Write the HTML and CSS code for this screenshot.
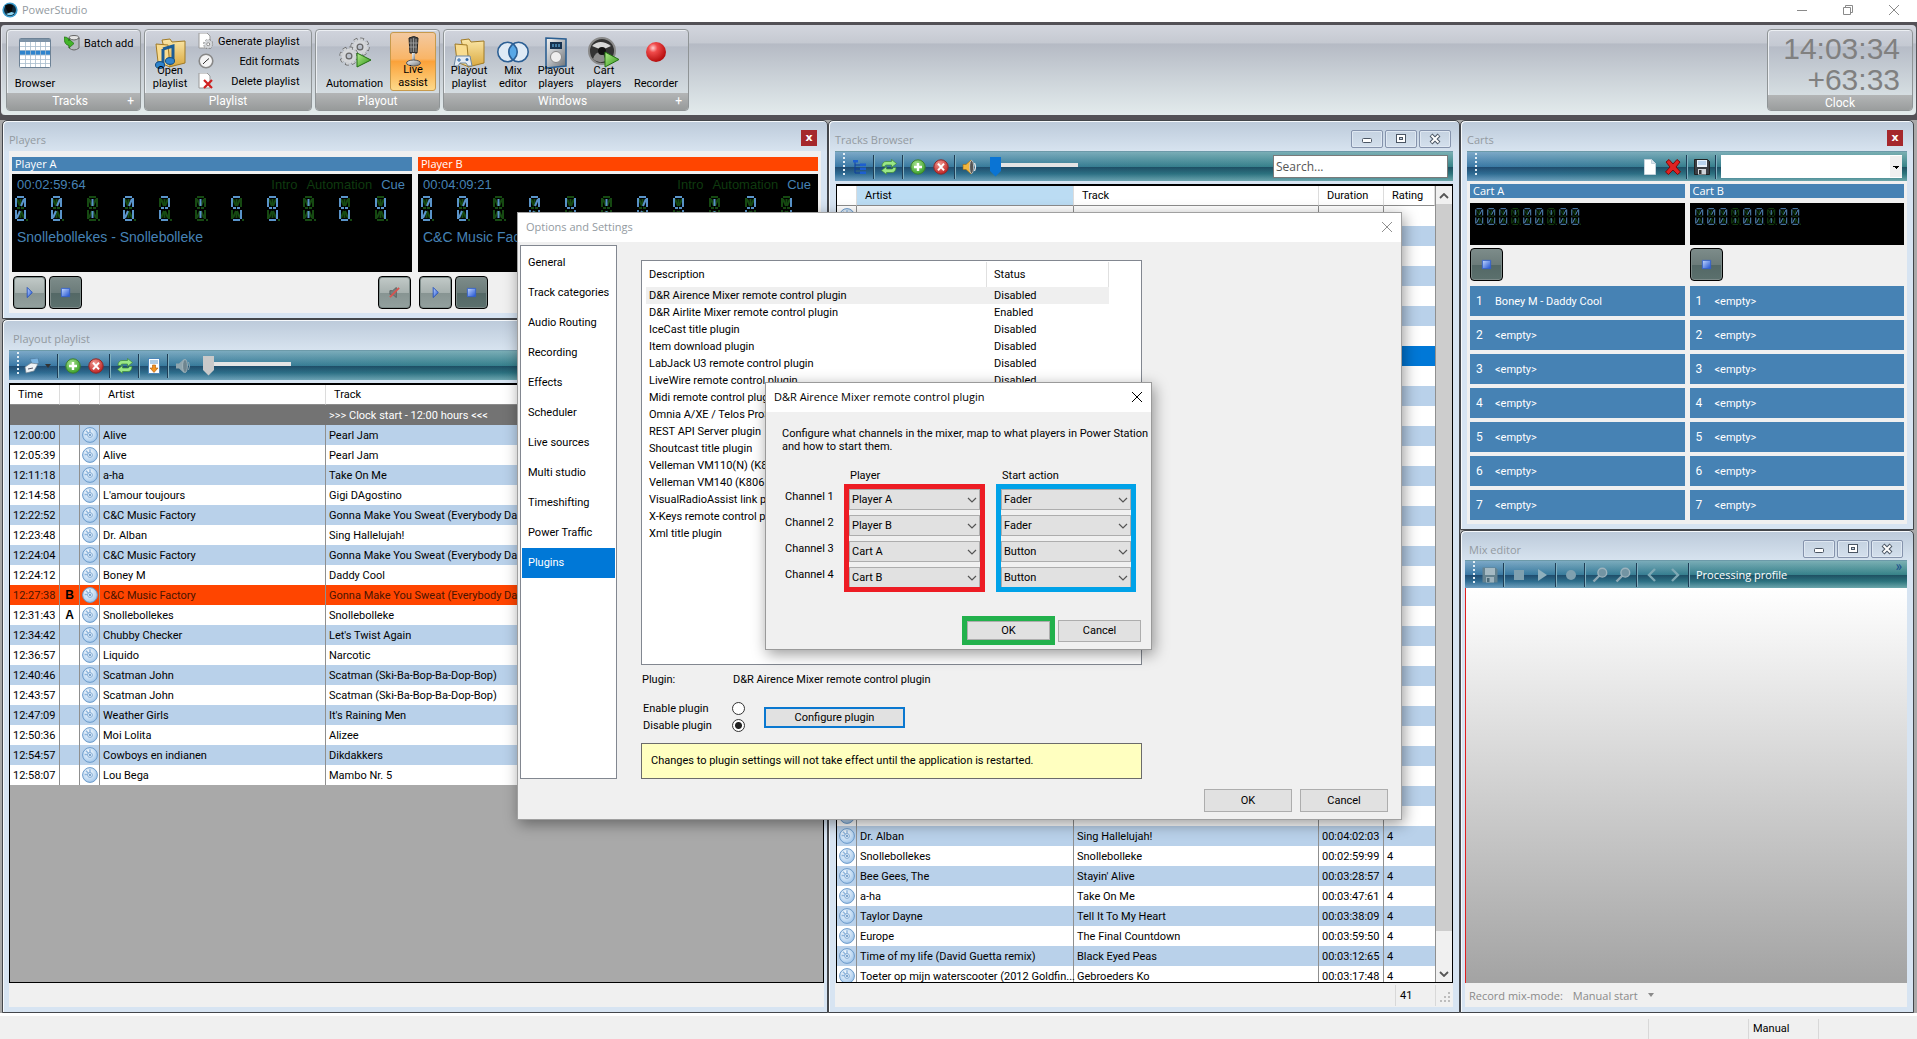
FILE: index.html
```html
<!DOCTYPE html>
<html lang="en">
<head>
<meta charset="utf-8">
<title>PowerStudio</title>
<link rel="stylesheet" href="styles.css">
</head>
<body>
<svg class="defs" aria-hidden="true">
  <defs>
    <radialGradient id="gDisc" cx=".4" cy=".35" r=".7"><stop offset="0" stop-color="#fff"/><stop offset=".6" stop-color="#c4dcf3"/><stop offset="1" stop-color="#9cc2e8"/></radialGradient>
    <radialGradient id="gGreen" cx=".4" cy=".3" r=".8"><stop offset="0" stop-color="#a5e08d"/><stop offset="1" stop-color="#2f9a1d"/></radialGradient>
    <radialGradient id="gRed" cx=".4" cy=".3" r=".8"><stop offset="0" stop-color="#f29a92"/><stop offset="1" stop-color="#b81212"/></radialGradient>
    <radialGradient id="gBall" cx=".35" cy=".3" r=".75"><stop offset="0" stop-color="#ffd0d0"/><stop offset=".3" stop-color="#f04a4a"/><stop offset="1" stop-color="#b00808"/></radialGradient>
    <linearGradient id="gBlue" x2="1" y2="1"><stop offset="0" stop-color="#c5d9ff"/><stop offset="1" stop-color="#1c4fd0"/></linearGradient>
    <linearGradient id="gFolder" x2="0" y2="1"><stop offset="0" stop-color="#fbe7a8"/><stop offset="1" stop-color="#d9a83e"/></linearGradient>
    <linearGradient id="gMetal" x2="1" y2="1"><stop offset="0" stop-color="#f4f4f4"/><stop offset=".5" stop-color="#b5b9bd"/><stop offset="1" stop-color="#6c7074"/></linearGradient>
    <linearGradient id="gPlay" x2="1" y2="1"><stop offset="0" stop-color="#b5ec8d"/><stop offset="1" stop-color="#2c9414"/></linearGradient>
    <symbol id="disc" viewBox="0 0 16 16"><circle cx="8" cy="8" r="7.4" fill="url(#gDisc)" stroke="#6b9bcb"/><path d="M8 2.2v4M4 3.8l2.6 2.8M2.6 7.5h3" stroke="#8db5dd" stroke-width="1.4"/><circle cx="8" cy="8" r="2.4" fill="#e8f2fc" stroke="#6b9bcb" stroke-width=".8"/><circle cx="8" cy="8" r=".9" class="hub"/></symbol>
    <symbol id="plus" viewBox="0 0 16 16"><circle cx="8" cy="8" r="7.2" fill="url(#gGreen)" stroke="#3c7f30"/><path d="M8 4v8M4 8h8" stroke="#fff" stroke-width="2.4"/></symbol>
    <symbol id="cross" viewBox="0 0 16 16"><circle cx="8" cy="8" r="7.2" fill="url(#gRed)" stroke="#8c2a2a"/><path d="M5 4.6l6 6.8M11 4.6l-6 6.8" stroke="#fff" stroke-width="2"/></symbol>
    <symbol id="refresh" viewBox="0 0 16 16"><path d="M1 7.500c0-3.500 2-5 4-5h5.500V.500l5 4-5 4V6H5.500C4.500 6 4 6.500 3.800 7.500zM15 8.500c0 3.500-2 5-4 5H5.500v2l-5-4 5-4V10h5c1 0 1.500-.500 1.700-1.500z" fill="#9be886" stroke="#3d8a35" stroke-width=".7"/></symbol>
    <symbol id="speaker" viewBox="0 0 16 16"><path d="M1 5.500h3L9 1v14L4 10.500H1z" fill="#f2b63c" stroke="#9a6a12" stroke-width=".6"/><ellipse cx="9.600" cy="8" rx="2" ry="6.600" fill="#555" stroke="#ddd" stroke-width=".7"/><path d="M12.500 4q2 4 0 8" stroke="#e8e8e8" stroke-width="1.200" fill="none"/></symbol>
    <symbol id="speakerOff" viewBox="0 0 16 16"><path d="M1 5.500h3L9 1v14L4 10.500H1z" fill="#8fa5ae"/><ellipse cx="10" cy="8" rx="2.400" ry="6.600" fill="#6e858f" stroke="#a9bbc2" stroke-width=".8"/><path d="M13.500 4q2 4 0 8" stroke="#8fa5ae" fill="none"/></symbol>
    <symbol id="stop" viewBox="0 0 12 12"><path d="M1.500 1.500h9v9h-9z" fill="url(#gBlue)" stroke="#3561c9"/></symbol>
    <symbol id="play" viewBox="0 0 12 12"><path d="M3.500.500v11L9 6z" fill="url(#gBlue)" stroke="#2450bb"/></symbol>
    <symbol id="mute" viewBox="0 0 12 12"><path d="M1 4h3l4-3.500v11L4 8H1z" fill="#77807f" stroke="#5a6160"/><path d="M1 11L11 1" stroke="#d9534f" stroke-width="2"/></symbol>
    <symbol id="min" viewBox="0 0 14 12"><rect x="2.500" y="5.500" width="9" height="4" rx="1" fill="#fff" stroke="#4a5563"/></symbol>
    <symbol id="max" viewBox="0 0 14 12"><rect x="2.500" y="1.500" width="9" height="8" fill="#fff" stroke="#4a5563"/><rect x="5.500" y="4.500" width="3" height="2" fill="#c8d4e4" stroke="#4a5563"/></symbol>
    <symbol id="shut" viewBox="0 0 14 12"><path d="M3 2l8 8M11 2l-8 8" stroke="#4a5563" stroke-width="4"/><path d="M3.500 2.500l7 7M10.500 2.500l-7 7" stroke="#fff" stroke-width="2"/></symbol>
    <symbol id="thinX" viewBox="0 0 12 12"><path d="M1 1l10 10M11 1L1 11" stroke="currentColor" fill="none"/></symbol>
    <symbol id="chev" viewBox="0 0 10 6"><path d="M1 1l4 4 4-4" stroke="#555" stroke-width="1.200" fill="none"/></symbol>
    <symbol id="floppy" viewBox="0 0 16 16"><path d="M.500.500h13l2 2v13H.500z" fill="#3b3f45" stroke="#222"/><rect x="3" y="1" width="10" height="7" fill="#e9f2fb"/><path d="M4 3h8M4 5h8" stroke="#8ab4e0"/><rect x="4" y="10" width="8" height="5.500" fill="#cfd3d8"/><rect x="5" y="11" width="2.500" height="4" fill="#333"/></symbol>
    <symbol id="floppyOff" viewBox="0 0 16 16"><path d="M.500.500h13l2 2v13H.500z" fill="#64828f"/><rect x="3" y="1" width="10" height="7" fill="#a5bac3"/><rect x="4" y="10" width="8" height="5.500" fill="#9db3bd"/><rect x="5" y="11" width="2.500" height="4" fill="#4b6a78"/></symbol>
    <symbol id="lens" viewBox="0 0 16 16"><path d="M1.500 14.500l6-6" stroke="#8fa9b5" stroke-width="2.400"/><circle cx="10.300" cy="5.700" r="4.400" fill="#7394a3" stroke="#9db3bd" stroke-width="1.400"/></symbol>
    <symbol id="gear" viewBox="0 0 16 16"><circle cx="8" cy="8" r="5.800" fill="none" stroke="#666" stroke-width="3.800" stroke-dasharray="2.600 1.950"/><circle cx="8" cy="8" r="4.200" fill="none" stroke="#d5d7da" stroke-width="3.400"/><circle cx="8" cy="8" r="5.800" fill="none" stroke="#d0d3d6" stroke-width="2.600" stroke-dasharray="2.200 2.350"/><circle cx="8" cy="8" r="2.300" fill="none" stroke="#666"/></symbol>
  </defs>
</svg>

<header class="app-bar">
  <svg class="logo" viewBox="0 0 16 16"><circle cx="8" cy="8" r="7.600" fill="#3c9ccd"/><circle cx="8" cy="8" r="6" fill="#0e2838"/><path d="M3 3.500q4-2.500 8 0l-2 9q-5-3-6-9z" fill="#0a0a0a"/><path d="M4 12q5 3 8.500-1l-3-1z" fill="#8fd8f5"/></svg>
  <h1>PowerStudio</h1>
  <div class="app-controls">
    <button aria-label="Minimize"><svg width="12" height="12" viewBox="0 0 12 12"><path d="M1 6.500h10" stroke="#8a8a8a"/></svg></button>
    <button aria-label="Restore"><svg width="12" height="12" viewBox="0 0 12 12"><path d="M1.500 3.500h7v7h-7zM3.500 3V1.500h7v7H9" stroke="#8a8a8a" fill="none"/></svg></button>
    <button aria-label="Close"><svg width="12" height="12"><use href="#thinX"/></svg></button>
  </div>
</header>

<nav class="ribbon">
  <section class="group tracks">
    <div class="tools">
      <button class="big"><svg viewBox="0 0 32 32"><rect x=".500" y="1.500" width="31" height="29" rx="1" fill="#fff" stroke="#6d8296"/><path d="M1 2h30v3H1z" fill="#7e94a8"/><path d="M1 13h30v5H1z" fill="#2f84cd"/><path d="M1 9.500h30M1 13.500h30M1 18h30M1 22.500h30M1 26.500h30M6.500 5v25M11.500 5v25M16.500 5v25M21.500 5v25M26.500 5v25" stroke="#a8bccd" stroke-width=".8"/></svg><span>Browser</span></button>
      <button class="small"><svg viewBox="0 0 16 16"><ellipse cx="10" cy="3" rx="5" ry="2.500" fill="#e5e5e5" stroke="#666"/><path d="M5 3v10q5 4 10 0V3q-5 4-10 0" fill="#b5b9bd" stroke="#666"/><path d="M0 2q5 0 5 4V4l5 4.500L5 13v-2.500Q0 10 0 2z" fill="#43b52a" stroke="#1d6d0f" stroke-width=".7"/></svg>Batch add</button>
    </div>
    <footer><span>Tracks</span><i>+</i></footer>
  </section>
  <section class="group playlist">
    <div class="tools">
      <button class="big"><svg viewBox="0 0 32 32"><path d="M8 3l8-1 2 3 13-1v22l-16 4z" fill="url(#gFolder)" stroke="#a07a26"/><path d="M2 7l12 1 2 22-12-5z" fill="#f9dc8f" stroke="#a07a26"/><path d="M9 12l10-3v14M9 12v15" stroke="#1c5d96" stroke-width="3" fill="none"/><ellipse cx="6" cy="28" rx="4.500" ry="3.400" fill="#2f84cd" stroke="#124a7c"/><ellipse cx="16" cy="24" rx="4.500" ry="3.400" fill="#2f84cd" stroke="#124a7c"/></svg><span>Open<br>playlist</span></button>
      <div class="stack">
        <button class="small"><svg viewBox="0 0 16 16"><path d="M1 0h8l3 3v12H1z" fill="#fff" stroke="#999"/><g transform="translate(5 6) scale(.65)"><use href="#gear" width="16" height="16"/></g></svg><span>Generate playlist</span></button>
        <button class="small"><svg viewBox="0 0 16 16"><circle cx="8" cy="8" r="6.800" fill="#f4f4f4" stroke="#888" stroke-width="1.600"/><path d="M8 8l3-2.500M8 8l-3 3" stroke="#333"/></svg><span>Edit formats</span></button>
        <button class="small"><svg viewBox="0 0 16 16"><path d="M1 0h8l3 3v12H1z" fill="#fff" stroke="#999"/><path d="M6 7l8 8M14 7l-8 8" stroke="#cf1f1f" stroke-width="2.200"/></svg><span>Delete playlist</span></button>
      </div>
    </div>
    <footer><span>Playlist</span></footer>
  </section>
  <section class="group playout">
    <div class="tools">
      <button class="big"><svg viewBox="0 0 32 32"><use href="#gear" x="11" y="0" width="20" height="20"/><use href="#gear" x="0" y="9" width="20" height="20"/><path d="M18 16v14l14-7z" fill="url(#gPlay)" stroke="#236f12"/></svg><span>Automation</span></button>
      <button class="big active"><svg viewBox="0 0 32 32"><path d="M12 2q5-3 9 0l-1 15h-7z" fill="#4a4a4a" stroke="#222"/><path d="M14 3v13M16.500 2v14M19 3v13M12 7h9M12 11h8" stroke="#a5a5a5" stroke-width=".8"/><path d="M15 17h3v8h-3z" fill="url(#gMetal)"/><ellipse cx="16.500" cy="27" rx="7" ry="3" fill="url(#gMetal)" stroke="#555"/></svg><span>Live<br>assist</span></button>
    </div>
    <footer><span>Playout</span></footer>
  </section>
  <section class="group windows">
    <div class="tools">
      <button class="big"><svg viewBox="0 0 32 32"><path d="M8 3l8-1 2 3 13-1v22l-16 4z" fill="url(#gFolder)" stroke="#a07a26"/><path d="M2 7l12 1 2 22-12-5z" fill="#f9dc8f" stroke="#a07a26"/><path d="M3 19h14l2 10h-4l-2-3H7l-2 3H1z" fill="#e4ebf2" stroke="#6c87a2"/><path d="M4 23h4M6 21v4" stroke="#2f68a8"/><circle cx="14" cy="22.500" r="1.500" fill="#2f68a8"/></svg><span>Playout<br>playlist</span></button>
      <button class="big"><svg viewBox="0 0 32 32"><circle cx="10.500" cy="15" r="10" fill="#dfeaf5"/><circle cx="21.500" cy="15" r="10" fill="#dfeaf5"/><path d="M16 6.700a10 10 0 0 1 0 16.600a10 10 0 0 1 0-16.600" fill="#57a7e6"/><circle cx="10.500" cy="15" r="9.700" fill="none" stroke="#2c5f94" stroke-width="1.600"/><circle cx="21.500" cy="15" r="9.700" fill="none" stroke="#2c5f94" stroke-width="1.600"/></svg><span>Mix<br>editor</span></button>
      <button class="big"><svg viewBox="0 0 32 32"><path d="M6 1l20 1v27l-20 2z" fill="url(#gMetal)" stroke="#2b5f92" stroke-width="1.600"/><rect x="10" y="5" width="12" height="7" fill="#16324f"/><path d="M13 7v3M16 7v3M19 7v3" stroke="#6fc3f5"/><circle cx="16" cy="20" r="5.500" fill="#eee" stroke="#888"/></svg><span>Playout<br>players</span></button>
      <button class="big"><svg viewBox="0 0 32 32"><circle cx="14" cy="14" r="13" fill="#333" stroke="#8a8a8a" stroke-width="2"/><path d="M4 9q8-8 19 0l-9 4z" fill="#d8d8d8"/><path d="M5 22q2-7 9-8l4 10q-8 3-13-2z" fill="#8c8c8c"/><circle cx="14" cy="14" r="4" fill="#111"/><path d="M17 15v15l14-7.500z" fill="url(#gPlay)" stroke="#236f12"/></svg><span>Cart<br>players</span></button>
      <button class="big"><svg viewBox="0 0 32 32"><circle cx="16" cy="15" r="10" fill="url(#gBall)"/></svg><span>Recorder</span></button>
    </div>
    <footer><span>Windows</span><i>+</i></footer>
  </section>
  <section class="group clock">
    <div class="time"><time>14:03:34</time><span>+63:33</span></div>
    <footer><span>Clock</span></footer>
  </section>
</nav>

<main class="desktop">
  <div class="col">
    <section class="win players">
      <header><h2>Players</h2><button class="red-x" aria-label="Close">x</button></header>
      <div class="client decks">
        <article class="deck">
          <h3>Player A</h3>
          <div class="lcd">
            <p class="info"><b>00:02:59:64</b><i>Intro</i><i>Automation</i><b>Cue</b></p>
            <div class="segs" data-value="00:02:59:64"></div>
            <p class="song">Snollebollekes - Snollebolleke</p>
          </div>
          <div class="keys"><button class="key" aria-label="Play"><svg><use href="#play"/></svg></button><button class="key dark" aria-label="Stop"><svg><use href="#stop"/></svg></button><button class="key last" aria-label="Mute"><svg><use href="#mute"/></svg></button></div>
        </article>
        <article class="deck">
          <h3 class="hot">Player B</h3>
          <div class="lcd">
            <p class="info"><b>00:04:09:21</b><i>Intro</i><i>Automation</i><b>Cue</b></p>
            <div class="segs" data-value="00:04:09:21"></div>
            <p class="song">C&amp;C Music Factory</p>
          </div>
          <div class="keys"><button class="key" aria-label="Play"><svg><use href="#play"/></svg></button><button class="key dark" aria-label="Stop"><svg><use href="#stop"/></svg></button></div>
        </article>
      </div>
    </section>
    <section class="win grow queue">
      <header><h2 class="in">Playout playlist</h2></header>
      <div class="toolbar">
        <span class="grip"></span>
        <button class="wide" aria-label="Print"><svg viewBox="0 0 16 16"><path d="M6 1l8-1 1 5-6 3z" fill="#7ab3e0" stroke="#4a7396" stroke-width=".6"/><path d="M1 9l6-4 7 1-4 7-8 2z" fill="#eef3f6" stroke="#70808c" stroke-width=".7"/><path d="M4 11l5-1" stroke="#556"/></svg><span class="caret"></span></button>
        <hr>
        <button aria-label="Add"><svg><use href="#plus"/></svg></button>
        <button aria-label="Remove"><svg><use href="#cross"/></svg></button>
        <hr>
        <button aria-label="Refresh"><svg><use href="#refresh"/></svg></button>
        <hr>
        <button aria-label="Insert"><svg viewBox="0 0 16 16"><rect x="2.500" y=".500" width="11" height="15" fill="#fff" stroke="#4f87b9"/><path d="M4 3h8M4 5h8" stroke="#5c98cf"/><path d="M6.500 7h3v3h2.500l-4 4.500-4-4.500h2.500z" fill="#f39321" stroke="#a8570a" stroke-width=".6"/></svg></button>
        <hr>
        <button aria-label="Volume"><svg><use href="#speakerOff"/></svg></button>
        <input class="vol off" type="range" value="0" aria-label="Playlist volume">
      </div>
      <div class="grid-box gray">
        <table class="grid pl">
          <colgroup><col><col><col><col><col></colgroup>
          <thead><tr><th>Time</th><th></th><th></th><th>Artist</th><th>Track</th></tr></thead>
          <tbody>
            <tr class="mark"><td></td><td></td><td></td><td></td><td>&gt;&gt;&gt; Clock start - 12:00 hours &lt;&lt;&lt;</td></tr>
            <tr><td>12:00:00</td><td></td><td><svg><use href="#disc"/></svg></td><td>Alive</td><td>Pearl Jam</td></tr>
            <tr><td>12:05:39</td><td></td><td><svg><use href="#disc"/></svg></td><td>Alive</td><td>Pearl Jam</td></tr>
            <tr><td>12:11:18</td><td></td><td><svg><use href="#disc"/></svg></td><td>a-ha</td><td>Take On Me</td></tr>
            <tr><td>12:14:58</td><td></td><td><svg><use href="#disc"/></svg></td><td>L'amour toujours</td><td>Gigi DAgostino</td></tr>
            <tr><td>12:22:52</td><td></td><td><svg><use href="#disc"/></svg></td><td>C&amp;C Music Factory</td><td>Gonna Make You Sweat (Everybody Dance Now)</td></tr>
            <tr><td>12:23:48</td><td></td><td><svg><use href="#disc"/></svg></td><td>Dr. Alban</td><td>Sing Hallelujah!</td></tr>
            <tr><td>12:24:04</td><td></td><td><svg><use href="#disc"/></svg></td><td>C&amp;C Music Factory</td><td>Gonna Make You Sweat (Everybody Dance Now)</td></tr>
            <tr><td>12:24:12</td><td></td><td><svg><use href="#disc"/></svg></td><td>Boney M</td><td>Daddy Cool</td></tr>
            <tr class="hot"><td>12:27:38</td><td><b>B</b></td><td><svg><use href="#disc"/></svg></td><td>C&amp;C Music Factory</td><td>Gonna Make You Sweat (Everybody Dance Now)</td></tr>
            <tr><td>12:31:43</td><td><b>A</b></td><td><svg><use href="#disc"/></svg></td><td>Snollebollekes</td><td>Snollebolleke</td></tr>
            <tr><td>12:34:42</td><td></td><td><svg><use href="#disc"/></svg></td><td>Chubby Checker</td><td>Let's Twist Again</td></tr>
            <tr><td>12:36:57</td><td></td><td><svg><use href="#disc"/></svg></td><td>Liquido</td><td>Narcotic</td></tr>
            <tr><td>12:40:46</td><td></td><td><svg><use href="#disc"/></svg></td><td>Scatman John</td><td>Scatman (Ski-Ba-Bop-Ba-Dop-Bop)</td></tr>
            <tr><td>12:43:57</td><td></td><td><svg><use href="#disc"/></svg></td><td>Scatman John</td><td>Scatman (Ski-Ba-Bop-Ba-Dop-Bop)</td></tr>
            <tr><td>12:47:09</td><td></td><td><svg><use href="#disc"/></svg></td><td>Weather Girls</td><td>It's Raining Men</td></tr>
            <tr><td>12:50:36</td><td></td><td><svg><use href="#disc"/></svg></td><td>Moi Lolita</td><td>Alizee</td></tr>
            <tr><td>12:54:57</td><td></td><td><svg><use href="#disc"/></svg></td><td>Cowboys en indianen</td><td>Dikdakkers</td></tr>
            <tr><td>12:58:07</td><td></td><td><svg><use href="#disc"/></svg></td><td>Lou Bega</td><td>Mambo Nr. 5</td></tr>
          </tbody>
        </table>
      </div>
      <div class="strip"></div>
    </section>
  </div>

  <section class="win browser">
    <header><h2>Tracks Browser</h2>
      <div class="caps"><button aria-label="Minimize"><svg><use href="#min"/></svg></button><button aria-label="Maximize"><svg><use href="#max"/></svg></button><button aria-label="Close"><svg><use href="#shut"/></svg></button></div>
    </header>
    <div class="toolbar">
      <span class="grip"></span>
      <button aria-label="Tree"><svg viewBox="0 0 16 16"><path d="M3 2v12h5M3 6h5M3 10h5" stroke="#0c3fa0" fill="none"/><path d="M1 1h5v2.500H1zM8 4.500h6V7H8zM8 8.500h6V11H8zM8 12.500h6V15H8z" fill="#1d5fd0"/></svg></button>
      <hr>
      <button aria-label="Refresh"><svg><use href="#refresh"/></svg></button>
      <hr>
      <button aria-label="Add"><svg><use href="#plus"/></svg></button>
      <button aria-label="Remove"><svg><use href="#cross"/></svg></button>
      <hr>
      <button aria-label="Volume"><svg><use href="#speaker"/></svg></button>
      <input class="vol" type="range" value="0" aria-label="Preview volume">
      <input class="search" type="text" value="Search..." aria-label="Search">
    </div>
    <div class="grid-box scrolled">
      <table class="grid tb">
        <colgroup><col><col><col><col><col></colgroup>
        <thead><tr><th></th><th class="sorted">Artist</th><th>Track</th><th>Duration</th><th>Rating</th></tr></thead>
        <tbody>
          <tr><td><svg><use href="#disc"/></svg></td><td></td><td>24 Gold Hour Live</td><td>00:04:44:04</td><td>4</td></tr>
          <tr><td><td><td><td><td></tr><tr><td><td><td><td><td></tr><tr><td><td><td><td><td></tr>
          <tr><td><td><td><td><td></tr><tr><td><td><td><td><td></tr><tr><td><td><td><td><td></tr>
          <tr class="picked"><td><td><td><td><td></tr><tr><td><td><td><td><td></tr><tr><td><td><td><td><td></tr>
          <tr><td><td><td><td><td></tr><tr><td><td><td><td><td></tr><tr><td><td><td><td><td></tr>
          <tr><td><td><td><td><td></tr><tr><td><td><td><td><td></tr><tr><td><td><td><td><td></tr>
          <tr><td><td><td><td><td></tr><tr><td><td><td><td><td></tr><tr><td><td><td><td><td></tr>
          <tr><td><td><td><td><td></tr><tr><td><td><td><td><td></tr><tr><td><td><td><td><td></tr>
          <tr><td><td><td><td><td></tr><tr><td><td><td><td><td></tr><tr><td><td><td><td><td></tr>
          <tr><td><td><td><td><td></tr><tr><td><td><td><td><td></tr><tr><td><td><td><td><td></tr>
          <tr><td><td><td><td><td></tr><tr><td><td><td><td><td></tr>
          <tr><td><svg><use href="#disc"/></svg></td><td>Tom Jones feat. Mousse T.</td><td>Sex Bomb</td><td>00:03:34:46</td><td>4</td></tr>
          <tr><td><svg><use href="#disc"/></svg></td><td>Dr. Alban</td><td>Sing Hallelujah!</td><td>00:04:02:03</td><td>4</td></tr>
          <tr><td><svg><use href="#disc"/></svg></td><td>Snollebollekes</td><td>Snollebolleke</td><td>00:02:59:99</td><td>4</td></tr>
          <tr><td><svg><use href="#disc"/></svg></td><td>Bee Gees, The</td><td>Stayin' Alive</td><td>00:03:28:57</td><td>4</td></tr>
          <tr><td><svg><use href="#disc"/></svg></td><td>a-ha</td><td>Take On Me</td><td>00:03:47:61</td><td>4</td></tr>
          <tr><td><svg><use href="#disc"/></svg></td><td>Taylor Dayne</td><td>Tell It To My Heart</td><td>00:03:38:09</td><td>4</td></tr>
          <tr><td><svg><use href="#disc"/></svg></td><td>Europe</td><td>The Final Countdown</td><td>00:03:59:50</td><td>4</td></tr>
          <tr><td><svg><use href="#disc"/></svg></td><td>Time of my life (David Guetta remix)</td><td>Black Eyed Peas</td><td>00:03:12:65</td><td>4</td></tr>
          <tr><td><svg><use href="#disc"/></svg></td><td>Toeter op mijn waterscooter (2012 Goldfin...</td><td>Gebroeders Ko</td><td>00:03:17:48</td><td>4</td></tr>
        </tbody>
      </table>
      <div class="scroll"><svg viewBox="0 0 10 6"><path d="M1 5l4-4 4 4" stroke="#555" stroke-width="1.800" fill="none"/></svg><div class="thumb"></div><svg viewBox="0 0 10 6"><path d="M1 1l4 4 4-4" stroke="#555" stroke-width="1.800" fill="none"/></svg></div>
    </div>
    <div class="strip count"><span>41</span><svg viewBox="0 0 12 12"><path d="M8 0h2v2H8zM4 4h2v2H4zM8 4h2v2H8zM0 8h2v2H0zM4 8h2v2H4zM8 8h2v2H8z" fill="#bdbdbd"/></svg></div>
  </section>

  <div class="col">
    <section class="win carts">
      <header><h2>Carts</h2><button class="red-x" aria-label="Close">x</button></header>
      <div class="toolbar end">
        <span class="grip"></span>
        <button class="push" aria-label="New"><svg viewBox="0 0 16 16"><path d="M2.500.500h7l4 4v11h-11z" fill="#fff" stroke="#c5d3dc"/><path d="M9.500.500v4h4" fill="#dde6ee" stroke="#c5d3dc"/></svg></button>
        <button aria-label="Delete"><svg viewBox="0 0 16 16"><path d="M1 3l3-2.500 4 4.500 4-4.500L15 3l-4 5 4.500 5-3 2.500L8 11l-4.500 4.500-3-2.500L5 8z" fill="#e02222" stroke="#7d0a0a"/></svg></button>
        <hr>
        <button aria-label="Save"><svg><use href="#floppy"/></svg></button>
        <hr>
        <span class="combo"><select aria-label="Cart set"><option></option></select><span class="drop"></span></span>
      </div>
      <div class="client racks">
        <article class="rack">
          <h3>Cart A</h3>
          <div class="lcd"><div class="segs tiny" data-value="000:00:00"></div></div>
          <button class="key dark" aria-label="Stop"><svg><use href="#stop"/></svg></button>
          <ol><li><b>1</b>Boney M - Daddy Cool</li><li><b>2</b>&lt;empty&gt;</li><li><b>3</b>&lt;empty&gt;</li><li><b>4</b>&lt;empty&gt;</li><li><b>5</b>&lt;empty&gt;</li><li><b>6</b>&lt;empty&gt;</li><li><b>7</b>&lt;empty&gt;</li></ol>
        </article>
        <article class="rack">
          <h3>Cart B</h3>
          <div class="lcd"><div class="segs tiny" data-value="000:00:00"></div></div>
          <button class="key dark" aria-label="Stop"><svg><use href="#stop"/></svg></button>
          <ol><li><b>1</b>&lt;empty&gt;</li><li><b>2</b>&lt;empty&gt;</li><li><b>3</b>&lt;empty&gt;</li><li><b>4</b>&lt;empty&gt;</li><li><b>5</b>&lt;empty&gt;</li><li><b>6</b>&lt;empty&gt;</li><li><b>7</b>&lt;empty&gt;</li></ol>
        </article>
      </div>
    </section>
    <section class="win grow mix">
      <header><h2>Mix editor</h2>
        <div class="caps"><button aria-label="Minimize"><svg><use href="#min"/></svg></button><button aria-label="Maximize"><svg><use href="#max"/></svg></button><button aria-label="Close"><svg><use href="#shut"/></svg></button></div>
      </header>
      <div class="toolbar">
        <span class="grip"></span>
        <button aria-label="Save"><svg><use href="#floppyOff"/></svg></button>
        <hr>
        <button aria-label="Stop"><svg viewBox="0 0 16 16"><path d="M3 3h10v10H3z" fill="#7fa0af"/></svg></button>
        <button aria-label="Play"><svg viewBox="0 0 16 16"><path d="M4 2v12l9-6z" fill="#8fb0bd"/></svg></button>
        <hr>
        <button aria-label="Record"><svg viewBox="0 0 16 16"><circle cx="8" cy="8" r="5" fill="#7fa0af"/></svg></button>
        <hr>
        <button aria-label="Zoom in"><svg><use href="#lens"/></svg></button>
        <button aria-label="Zoom out"><svg><use href="#lens"/></svg></button>
        <hr>
        <button aria-label="Previous"><svg viewBox="0 0 16 16"><path d="M11 2L5 8l6 6" stroke="#7fa9b5" stroke-width="2.400" fill="none"/></svg></button>
        <button aria-label="Next"><svg viewBox="0 0 16 16"><path d="M5 2l6 6-6 6" stroke="#7fa9b5" stroke-width="2.400" fill="none"/></svg></button>
        <hr>
        <span class="profile">Processing profile</span>
        <span class="more">»</span>
      </div>
      <div class="canvas"></div>
      <div class="strip mode"><span>Record mix-mode:</span><span>Manual start</span><span class="caret"></span></div>
    </section>
  </div>
</main>

<footer class="status"><span></span><span>Manual</span></footer>

<section class="dialog options" role="dialog" aria-label="Options and Settings">
  <header><h2>Options and Settings</h2><button aria-label="Close"><svg width="12" height="12"><use href="#thinX"/></svg></button></header>
  <div class="opt-body">
    <ul class="pages"><li>General</li><li>Track categories</li><li>Audio Routing</li><li>Recording</li><li>Effects</li><li>Scheduler</li><li>Live sources</li><li>Multi studio</li><li>Timeshifting</li><li>Power Traffic</li><li class="on">Plugins</li></ul>
    <div class="page">
      <div class="list">
        <table>
          <colgroup><col><col></colgroup>
          <thead><tr><th>Description</th><th>Status</th></tr></thead>
          <tbody>
            <tr class="on"><td>D&amp;R Airence Mixer remote control plugin</td><td>Disabled</td></tr>
            <tr><td>D&amp;R Airlite Mixer remote control plugin</td><td>Enabled</td></tr>
            <tr><td>IceCast title plugin</td><td>Disabled</td></tr>
            <tr><td>Item download plugin</td><td>Disabled</td></tr>
            <tr><td>LabJack U3 remote control plugin</td><td>Disabled</td></tr>
            <tr><td>LiveWire remote control plugin</td><td>Disabled</td></tr>
            <tr><td>Midi remote control plugin</td><td></td></tr>
            <tr><td>Omnia A/XE / Telos ProSTREAM plugin</td><td></td></tr>
            <tr><td>REST API Server plugin</td><td></td></tr>
            <tr><td>Shoutcast title plugin</td><td></td></tr>
            <tr><td>Velleman VM110(N) (K8055) plugin</td><td></td></tr>
            <tr><td>Velleman VM140 (K8061) plugin</td><td></td></tr>
            <tr><td>VisualRadioAssist link plugin</td><td></td></tr>
            <tr><td>X-Keys remote control plugin</td><td></td></tr>
            <tr><td>Xml title plugin</td><td></td></tr>
          </tbody>
        </table>
      </div>
      <p class="which"><span>Plugin:</span><span>D&amp;R Airence Mixer remote control plugin</span></p>
      <div class="toggle">
        <div class="radios">
          <label for="en">Enable plugin</label><input type="radio" name="plug" id="en">
          <label for="dis">Disable plugin</label><input type="radio" name="plug" id="dis" checked>
        </div>
        <button class="btn focus">Configure plugin</button>
      </div>
      <p class="note">Changes to plugin settings will not take effect until the application is restarted.</p>
    </div>
  </div>
  <footer><button class="btn">OK</button><button class="btn">Cancel</button></footer>
</section>

<section class="dialog mapping" role="dialog" aria-label="D&amp;R Airence Mixer remote control plugin">
  <header><h2>D&amp;R Airence Mixer remote control plugin</h2><button aria-label="Close"><svg width="12" height="12"><use href="#thinX"/></svg></button></header>
  <p>Configure what channels in the mixer, map to what players in Power Station<br>and how to start them.</p>
  <div class="map">
    <span></span><span class="cap">Player</span><span class="cap">Start action</span>
    <div class="names"><label for="p1">Channel 1</label><label for="p2">Channel 2</label><label for="p3">Channel 3</label><label for="p4">Channel 4</label></div>
    <div class="picks red">
      <span class="pick"><select id="p1"><option>Player A</option></select><svg><use href="#chev"/></svg></span>
      <span class="pick"><select id="p2"><option>Player B</option></select><svg><use href="#chev"/></svg></span>
      <span class="pick"><select id="p3"><option>Cart A</option></select><svg><use href="#chev"/></svg></span>
      <span class="pick"><select id="p4"><option>Cart B</option></select><svg><use href="#chev"/></svg></span>
    </div>
    <div class="picks blue">
      <span class="pick"><select aria-label="Start action 1"><option>Fader</option></select><svg><use href="#chev"/></svg></span>
      <span class="pick"><select aria-label="Start action 2"><option>Fader</option></select><svg><use href="#chev"/></svg></span>
      <span class="pick"><select aria-label="Start action 3"><option>Button</option></select><svg><use href="#chev"/></svg></span>
      <span class="pick"><select aria-label="Start action 4"><option>Button</option></select><svg><use href="#chev"/></svg></span>
    </div>
  </div>
  <footer><span class="ring"><button class="btn">OK</button></span><button class="btn">Cancel</button></footer>
</section>
<script src="segments.js"></script>
</body>
</html>
```
FILE: styles.css
```css
* { box-sizing: border-box; margin: 0; padding: 0; }
body {
  position: relative; display: flex; flex-direction: column; height: 100vh; overflow: hidden;
  background: #535156; color: #000; font: 11px/13px Roboto, "Liberation Sans", sans-serif;
}
h1, h2, h3 { font-weight: 400; font-size: inherit; }
h1, h2, h3, .strip, .search { font-family: "Open Sans", "Noto Sans", sans-serif; }
h1, h2 { font-size: 11px; line-height: 16px; color: #939aa1; }
button { font: inherit; color: inherit; background: none; border: 0; }
ul, ol { list-style: none; }
i, b { font-style: normal; font-weight: 400; }
.defs { position: absolute; width: 0; height: 0; }

/* application title bar */
.app-bar { display: flex; align-items: center; flex: none; height: 22px; padding: 0 17px 2px 2px; background: #fff; }
.logo { width: 16px; height: 16px; margin-right: 4px; }
.app-controls { display: flex; gap: 34px; margin-left: auto; color: #8a8a8a; }
.app-controls button { width: 12px; height: 12px; }
.app-controls svg { display: block; }

/* ribbon */
.ribbon {
  display: flex; gap: 3px; flex: none; margin: 3px 1px 5px; padding: 4px 3px 4px 4px; border-radius: 4px;
  border: 1px solid #dfe3e8; border-width: 0 0 0 1px;
  background: linear-gradient(#d3d6de, #c5c9d1 20%, #b5bac4 21%, #ccd3d9 60%, #e3ebec);
}
.group {
  display: flex; flex-direction: column; height: 82px; border: 1px solid #8f9496; border-radius: 4px; overflow: hidden;
  box-shadow: inset 1px 1px 0 #eceff3; background: linear-gradient(#d0d3dc, #c4c9d2 20%, #b6bcc7 21%, #d5dde1 80%);
}
.group footer { display: flex; flex: none; height: 17px; padding: 0 6px; background: linear-gradient(#b3b5b6, #979a9a); color: #fff; font-size: 12px; line-height: 16px; }
.group footer span { flex: 1; text-align: center; }
.tools { display: flex; flex: 1; padding: 1px 3px 2px; }
.tracks { width: 135px; }
.playlist { width: 168px; }
.playout { width: 125px; }
.windows { width: 246px; }
.big { display: grid; flex: none; justify-items: center; height: 60px; padding: 6px 0 0; }
.big svg { grid-area: 1 / 1; width: 32px; height: 32px; }
.big span { grid-area: 1 / 1; align-self: end; padding-bottom: 1px; }
.tracks .big { width: 50px; }
.playlist .big { width: 44px; }
.windows .big { width: 44px; }
.windows .big:nth-child(3) { width: 42px; }
.windows .big:nth-child(4) { width: 54px; }
.windows .big:nth-child(5) { width: 50px; }
.playout .big { flex: 1; }
.playout .active { flex: none; width: 46px; height: 59px; margin-top: 1px; padding-top: 3px; border: 1px solid #c79a4c; border-radius: 3px; background: linear-gradient(#f3c9a0, #f9b567 45%, #fba23a 50%, #fdd98a); }
.small { display: flex; align-items: center; gap: 4px; height: 20px; white-space: nowrap; }
.small svg { width: 16px; height: 16px; flex: none; }
.tracks .small { margin: 2px 0 0 4px; }
.stack { display: grid; flex: 1; align-content: start; padding: 0 9px 0 6px; }
.stack span { flex: 1; text-align: right; }
.clock { width: 146px; margin-left: auto; }
.time { display: flex; flex-direction: column; flex: 1; padding: 3px 12px 0 0; color: #808080; font: 30px/31px "Liberation Sans", Arial, sans-serif; text-align: right; }

/* tiled windows */
.desktop { display: grid; grid-template-columns: 826fr 632fr 454fr; flex: 1; min-height: 0; padding: 0 3px 0 2px; background: #a9a9a9; }
.col { display: flex; flex-direction: column; min-width: 0; min-height: 0; }
.win {
  display: flex; flex-direction: column; min-width: 0; min-height: 0; padding: 0 6px 5px; border: 1px solid #43464b; border-radius: 5px 5px 0 0;
  box-shadow: inset 1px 1px 0 #f6f9fc; background: linear-gradient(#bccada, #d7e3ef 30px, #d7e4f2 31px);
}
.grow { flex: 1; }
.queue { padding-right: 3px; }
.win > header { display: flex; align-items: center; justify-content: space-between; flex: none; height: 30px; padding-top: 8px; }
.win h2.in { padding-left: 4px; }
.red-x { width: 16px; height: 16px; margin: 0 4px 4px 0; background: #a5282c; color: #fff; font: bold 11px/12px "DejaVu Sans", sans-serif; }
.caps { display: flex; gap: 2px; margin: 0 2px 2px 0; }
.caps button { width: 32px; height: 18px; border: 1px solid #8593ac; border-radius: 2px; box-shadow: inset 0 0 0 1px #dfe8f2; }
.caps svg { display: block; width: 14px; height: 12px; margin: auto; }
.client { background: #f0f0f0; }
.strip { flex: none; height: 24px; background: #f0f0f0; font-size: 11px; }

/* player decks */
.decks { display: grid; grid-template-columns: 1fr 1fr; gap: 6px; padding: 6px 3px 4px; }
.deck { display: grid; gap: 3px; min-width: 0; }
h3 { height: 14px; padding-left: 3px; background: #4682b4; color: #fff; font-size: 11px; line-height: 14px; }
h3.hot { background: #ff4500; }
.lcd { background: #000; color: #4682b4; overflow: hidden; }
.deck .lcd { height: 98px; font: 14px/18px "Liberation Sans", Arial, sans-serif; }
.info { display: flex; gap: 9px; padding: 2px 7px 0 5px; font-size: 13px; }
.info b:first-child { flex: 1; }
.info i { color: #0f3a0f; }
.segs { display: flex; gap: 23px; padding: 2px 3px 0; }
.segs svg { flex: none; width: 13px; height: 25px; }
.segs.tiny { gap: 2px; padding: 5px 5px 0; }
.segs.tiny svg { width: 10px; height: 17px; }
.lit { stroke: #5a94ca; }
.dim { stroke: #164a12; }
.song { padding: 7px 0 0 5px; white-space: nowrap; }
.keys { display: flex; gap: 3px; padding: 1px 1px 0; }
.key { width: 33px; height: 33px; border: 1px solid #000; border-radius: 4px; box-shadow: inset 0 0 0 1px #7c8a88; background: linear-gradient(#c2cac8, #a7b1af 50%, #879492 51%, #93a09e); }
.key.dark { background: linear-gradient(#7d8c8a, #6c7c7a 50%, #546866 51%, #5b706d); }
.key svg { display: block; width: 11px; height: 11px; margin: auto; }
.key.last { margin-left: auto; }

/* toolbars */
.toolbar {
  display: flex; align-items: center; flex: none; height: 30px; padding: 0 5px 0 7px; border-top: 1px solid #6c9aa9;
  background: linear-gradient(rgba(255,255,255,.32), rgba(0,20,40,.05) 50%, rgba(0,20,50,.5) 51%, rgba(0,50,70,.25) 75%, rgba(255,255,255,.25)), linear-gradient(90deg, #3f7fae, #3a8594 50%, #3b8a8e);
}
.toolbar button { flex: none; width: 23px; height: 24px; }
.toolbar .wide { display: flex; align-items: center; gap: 5px; width: 33px; padding-left: 2px; }
.toolbar svg { display: block; width: 16px; height: 16px; margin: auto; }
.toolbar .wide svg { margin: 0; }
.grip { flex: none; width: 2px; height: 22px; margin: 0 3px 6px 1px; background: repeating-linear-gradient(#e4eef4 0 2px, transparent 2px 4px); }
.toolbar hr { flex: none; width: 2px; height: 24px; margin: 0 2px; border: 0; background: linear-gradient(90deg, #1e3d55 50%, #80b0c0 50%); }
.caret { width: 0; height: 0; border: 3px solid transparent; border-top: 4px solid #333; border-bottom: 0; }
.vol { appearance: none; width: 88px; height: 20px; margin-left: 9px; background: linear-gradient(#e4e4e4, #e4e4e4) 0 6px / 100% 4px no-repeat; }
.vol::-webkit-slider-thumb { appearance: none; width: 11px; height: 20px; background: #0a74d4; clip-path: polygon(0 0, 100% 0, 100% 72%, 50% 100%, 0 72%); }
.vol.off::-webkit-slider-thumb { background: #c9c9c9; }
.search { width: 175px; height: 23px; margin-left: auto; border: 1px solid #7a7a7a; padding: 0 2px; background: #fff; color: #555; font-size: 12px; }
.push { margin-left: auto; }
.combo { display: grid; width: 181px; height: 23px; margin-left: 2px; }
.combo select { grid-area: 1 / 1; appearance: none; border: 0; border-radius: 0; background: #fff; }
.combo .drop { grid-area: 1 / 1; justify-self: end; align-self: center; width: 12px; height: 21px; pointer-events: none; background: linear-gradient(45deg, transparent 50%, #000 50%) 3px 10px / 3px 3px no-repeat, linear-gradient(-45deg, transparent 50%, #000 50%) 6px 10px / 3px 3px no-repeat, #f0f0f0; }
.profile { padding-left: 4px; color: #fff; font: 11px/16px "Open Sans", sans-serif; }
.more { align-self: flex-start; margin-left: auto; color: #1c4f8c; font-size: 14px; line-height: 10px; }

/* data grids */
.grid-box { flex: 1; min-height: 0; margin-top: 3px; border: 1px solid #000; border-top-width: 2px; overflow: hidden; background: #fff; }
.grid-box.gray { background: #a9a9a9; }
.scrolled { display: flex; margin-left: 1px; }
.grid { width: 100%; table-layout: fixed; border-spacing: 0; text-align: left; }
.scrolled .grid { flex: 1; align-self: flex-start; min-width: 0; }
.grid th { height: 20px; padding: 0 0 0 8px; border-right: 1px solid #dcdcdc; border-bottom: 1px solid #8c8c8c; background: #fff; font-weight: 400; }
.grid th.sorted { background: #bbdcf3; }
.grid td { height: 20px; padding: 0 0 0 3px; border-right: 1px solid #8f8f8f; white-space: nowrap; }
.grid td:last-child { border-right: 0; }
.grid svg { display: block; width: 16px; height: 16px; margin-left: -1px; }
.pl col:nth-child(1) { width: 50px; }
.pl col:nth-child(2), .pl col:nth-child(3) { width: 20px; }
.pl col:nth-child(4) { width: 226px; }
.pl td:nth-child(2) { text-align: center; padding: 0; }
.pl td b { font: bold 12px/14px "Liberation Sans", sans-serif; }
.tb col:nth-child(1) { width: 20px; }
.tb col:nth-child(2) { width: 217px; }
.tb col:nth-child(4) { width: 65px; }
.tb col:nth-child(5) { width: 51px; }
.grid tbody tr { background: #fff; }
.grid tbody tr:nth-child(even) { background: #b9d1ea; }
.grid tbody tr.mark { background: #737373; color: #fff; }
.grid tr.mark td { border-right-color: #737373; }
.grid tbody tr.hot { background: #ff4500; color: #4a1400; }
.hot b { color: #000; }
.hot .hub { fill: #e03c1c; }
.grid tbody tr.picked { background: #0078d7; }
.hub { fill: #4a7fb5; }
.scroll { display: flex; flex-direction: column; flex: none; align-items: center; width: 17px; border-left: 1px solid #8f8f8f; background: #f0f0f0; }
.scroll svg { width: 10px; height: 6px; margin: 7px 0 5px; }
.thumb { width: 16px; flex: 0 0 727px; margin-bottom: auto; background: #cdcdcd; }
.count { display: flex; justify-content: flex-end; align-items: center; font-family: Roboto, sans-serif; }
.count span { width: 41px; height: 21px; padding-left: 4px; border: 1px solid #d8d8d8; border-width: 0 1px; line-height: 21px; }
.count svg { width: 12px; height: 12px; margin: 6px 1px 0 4px; }

/* cart racks */
.racks { display: grid; grid-template-columns: 1fr 1fr; gap: 5px; padding: 3px 3px 4px; }
.rack .lcd { height: 42px; margin: 5px 0 3px; }
.rack .key { display: block; }
.rack ol { display: grid; gap: 4px; margin-top: 5px; }
.rack li { height: 30px; padding-left: 6px; background: #4682b4; color: #fff; line-height: 30px; }
.rack li b { display: inline-block; width: 19px; font-size: 12px; }
.mix { padding: 0 6px 5px 4px; }
.mix > header { height: 29px; padding-left: 4px; }
.mix .caps { margin-right: 4px; }
.mix .toolbar { height: 28px; }
.canvas { flex: 1; border-left: 1px solid #e02020; background: linear-gradient(#fff, #a3a3a3); }
.mode { display: flex; align-items: center; gap: 10px; padding-left: 4px; color: #8a8a8a; }
.mode .caret { border-top-color: #8a8a8a; }
.status { display: flex; justify-content: flex-end; align-items: end; flex: none; height: 26px; padding-right: 98px; border-top: 3px solid #fff; background: #f0f0f0; }
.status span { width: 100px; height: 20px; padding-left: 4px; border-left: 1px solid #d8d8d8; line-height: 20px; }
.status span:last-child { width: 71px; border-right: 1px solid #d8d8d8; }

/* dialogs */
.dialog { position: absolute; display: flex; flex-direction: column; border: 1px solid #a0a0a0; background: #f0f0f0; box-shadow: 2px 4px 14px rgba(0,0,0,.4); }
.dialog > header { display: flex; align-items: center; justify-content: space-between; flex: none; height: 29px; padding: 0 8px 2px; background: #fff; }
.dialog > header svg { display: block; color: #8f8f8f; }
.dialog > footer { display: flex; justify-content: flex-end; }
.btn { border: 1px solid #adadad; background: #e1e1e1; text-align: center; }
.options { left: 517px; top: 212px; width: 885px; }
.opt-body { display: flex; align-items: stretch; gap: 24px; padding: 3px 3px 10px 2px; }
.pages { flex: none; width: 97px; border: 1px solid #828790; padding: 2px 1px; background: #fff; }
.pages li { height: 30px; padding-left: 6px; line-height: 30px; }
.pages .on { background: #0078d7; color: #fff; }
.page { width: 501px; padding-top: 15px; }
.list { height: 405px; border: 1px solid #828790; padding: 1px 4px; background: #fff; }
.list table { width: 463px; table-layout: fixed; border-spacing: 0; text-align: left; }
.list col:last-child { width: 122px; }
.list th { height: 25px; padding-left: 3px; border-right: 1px solid #e0e0e0; font-weight: 400; }
.list td { height: 17px; padding-left: 3px; white-space: nowrap; }
.list th:last-child, .list td:last-child { padding-left: 7px; }
.list .on td { background: #efefef; }
.which { display: flex; height: 28px; align-items: center; padding-left: 1px; }
.which span:first-child { width: 91px; }
.toggle { display: flex; align-items: center; gap: 19px; padding: 7px 0 9px 2px; }
.radios { display: grid; grid-template-columns: 89px 13px; grid-auto-rows: 17px; align-items: center; }
.radios input { appearance: none; width: 13px; height: 13px; border: 1px solid #333; border-radius: 50%; background: #fff; }
.radios input:checked { background: radial-gradient(#222 3px, #fff 4px); }
.focus { width: 141px; height: 21px; border: 2px solid #0a78d0; }
.note { height: 36px; padding-left: 9px; border: 1px solid #6b6b6b; background: #ffffc0; line-height: 34px; }
.options > footer { gap: 8px; padding: 0 13px 7px 0; }
.options > footer .btn { width: 88px; height: 23px; }
.mapping { left: 765px; top: 382px; width: 387px; border-color: #9a9a9a; }
.mapping > header h2 { color: #000; }
.mapping > header svg { color: #000; }
.mapping > p { padding: 15px 0 0 16px; white-space: nowrap; }
.map { display: grid; grid-template-columns: 59px 141px 151px; padding: 16px 0 0 19px; }
.map .blue, .map .cap:nth-child(3) { margin-left: 11px; }
.cap { height: 15px; padding-left: 6px; }
.names { display: grid; grid-auto-rows: 26px; align-content: start; line-height: 26px; }
.picks { display: grid; gap: 5px; height: 108px; align-content: start; overflow: hidden; border: 5px solid #ed1c24; }
.picks.blue { border-color: #00a2e8; }
.pick { display: grid; height: 21px; }
.pick select { grid-area: 1 / 1; appearance: none; border: 1px solid #adadad; border-radius: 0; background: #e1e1e1; color: #000; font: inherit; padding-left: 2px; }
.pick svg { grid-area: 1 / 1; align-self: center; justify-self: end; width: 10px; height: 6px; margin-right: 3px; pointer-events: none; }
.mapping > footer { align-items: center; gap: 3px; padding: 24px 10px 4px 0; }
.ring { display: flex; border: 5px solid #22b14c; }
.mapping .btn { width: 83px; height: 22px; }
.ring .btn { height: 19px; }
```
FILE: segments.js
```js
// Fourteen-segment read-outs for the player and cart displays.
const PATHS = {
  a: 'M2 1H9', b: 'M10 2V11', c: 'M10 14V23', d: 'M2 24H9', e: 'M1 14V23', f: 'M1 2V11',
  g: 'M2 12H5', h: 'M6 12H9', i: 'M2 3L5 10', j: 'M5.5 3V10', k: 'M9 3L6 10',
  l: 'M2 22L5 15', m: 'M5.5 15V22', n: 'M9 22L6 15', p: 'M12 23V25'
};
const GLYPHS = {
  0: 'abcdefkl', 1: 'bc', 2: 'abghed', 3: 'abcdgh', 4: 'fbghc', 5: 'afghcd',
  6: 'afghecd', 9: 'abcdfgh', ':': 'jm'
};
for (const box of document.querySelectorAll('.segs')) {
  const width = box.classList.contains('tiny') ? 1.3 : 2;
  box.innerHTML = [...box.dataset.value].map(ch => {
    const lit = GLYPHS[ch];
    const draw = on => Object.keys(PATHS).filter(s => lit.includes(s) === on)
      .map(s => `<path class="${on ? 'lit' : 'dim'}" d="${PATHS[s]}"/>`).join('');
    return `<svg viewBox="0 0 13 25" preserveAspectRatio="none" fill="none" stroke-width="${width}">${draw(false)}${draw(true)}</svg>`;
  }).join('');
}
```
